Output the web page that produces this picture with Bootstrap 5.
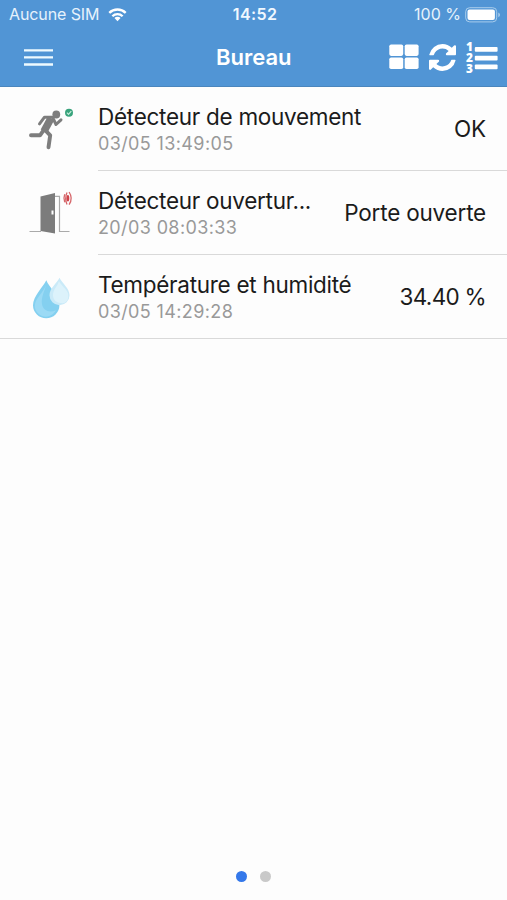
<!DOCTYPE html>
<html lang="fr">
<head>
<meta charset="utf-8">
<meta name="viewport" content="width=device-width, initial-scale=1">
<title>Bureau</title>
<link href="https://cdn.jsdelivr.net/npm/bootstrap@5.3.0/dist/css/bootstrap.min.css" rel="stylesheet">
<style>
body{font-family:Inter,"Liberation Sans",sans-serif;background:#fdfdfd;color:#1b1b1b;height:900px;overflow:hidden}
svg{display:block;flex:none}
.app-top{background:#5195d5;height:87px;border-bottom:1px solid #4b86bd;color:#fff}
.status{height:29px;display:grid;grid-template-columns:1fr auto 1fr;font-size:16px;line-height:29px;padding:0 6px 0 9px;color:#e6f2fc}
.carrier{letter-spacing:-.1px}
.wifi{margin-left:9px}
.clock{font-size:16px;font-weight:600;letter-spacing:.4px;color:#f0f8ff}
.titlebar{height:57px;display:grid;grid-template-columns:192px auto 1fr;padding:0 9px 0 24px}
.heading{font-size:22px;font-weight:600;line-height:57px}
.refresh{margin-left:10px}
.numbers{margin-left:9px}
.sensor{height:84px;padding-left:25px}
.pic{width:50px;height:50px;margin-right:23px}
.detail{border-bottom:1px solid #d9d9d9;padding-right:21px}
.sensor:last-child{border-bottom:1px solid #d9d9d9}
.sensor:last-child .detail{border-bottom:0}
.label-name{font-size:22.5px;line-height:28px;letter-spacing:-.28px;white-space:nowrap;padding-top:1px}
.stamp{font-size:18px;line-height:25px;color:#999;letter-spacing:.38px}
.reading{font-size:22.5px;line-height:28px;letter-spacing:-.2px}
.reading.tight{letter-spacing:-.7px}
.dots{height:47px;gap:13px}
.dot{width:11px;height:11px;border-radius:50%;background:#c9c9c9}
.dot.on{background:#3478ea}
</style>
<script src="https://cdn.jsdelivr.net/npm/bootstrap@5.3.0/dist/js/bootstrap.bundle.min.js"></script>
</head>
<body class="d-flex flex-column">
<header class="app-top">
  <div class="status">
    <div class="d-flex align-items-center"><span class="carrier">Aucune SIM</span>
      <svg class="wifi" width="19" height="14" viewBox="0 0 20 15" fill="none" stroke="#fff" stroke-width="2.5"><path d="M1.2 5.3a12.400 12.400 0 0 1 17.600 0M4.500 8.800a7.800 7.800 0 0 1 11 0"/><path d="M10 14.200l-3.300-3.400a4.700 4.700 0 0 1 6.600 0z" fill="#fff" stroke="none"/></svg>
    </div>
    <span class="clock">14:52</span>
    <div class="d-flex align-items-center justify-content-end"><span>100 %</span>
      <svg class="ms-1" width="36" height="16" viewBox="0 0 36 16"><rect x=".7" y=".7" width="31" height="14.200" rx="4" fill="none" stroke="#a9cdec"/><rect x="2.500" y="2.500" width="27.400" height="10.600" rx="2" fill="#fff"/><path d="M33.300 5.400v4.800q1.700-.7 1.700-2.400t-1.700-2.400z" fill="#a9cdec"/></svg>
    </div>
  </div>
  <div class="titlebar">
    <div class="d-flex align-items-center"><svg width="29" height="18" viewBox="0 0 29 18" stroke="#eefaff" stroke-width="2.300"><path d="M0 1.300h29M0 8.300h29M0 15.500h29"/></svg></div>
    <span class="heading">Bureau</span>
    <div class="d-flex align-items-center justify-content-end">
      <svg width="30" height="28" viewBox="0 0 30 28" fill="#fff"><rect x=".3" y=".4" width="13.900" height="11.500" rx="1.800"/><rect x="15.700" y=".4" width="13.900" height="11.500" rx="1.800"/><rect x=".3" y="13.500" width="13.900" height="11.500" rx="1.800"/><rect x="15.700" y="13.500" width="13.900" height="11.500" rx="1.800"/></svg>
      <svg class="refresh" width="27" height="27" viewBox="0 128 1536 1536" fill="#fff"><path d="M1511 1056q0 5-1 7-64 268-268 434.500t-478 166.500q-146 0-282.500-55t-243.500-157l-129 129q-19 19-45 19t-45-19-19-45v-448q0-26 19-45t45-19h448q26 0 45 19t19 45-19 45l-137 137q71 66 161 102t187 36q134 0 250-65t186-179q11-17 53-117 8-23 30-23h192q13 0 22.500 9.500t9.500 22.500zm25-800v448q0 26-19 45t-45 19h-448q-26 0-45-19t-19-45 19-45l138-138q-148-137-349-137-134 0-250 65t-186 179q-11 17-53 117-8 23-30 23h-199q-13 0-22.500-9.500t-9.500-22.500v-7q65-268 270-434.500t480-166.500q146 0 284 55.500t245 156.500l130-129q19-19 45-19t45 19 19 45z"/></svg>
      <svg class="numbers" width="33" height="34" viewBox="0 0 33 34" fill="#fff"><g font-family="Open Sans, sans-serif" font-weight="800" font-size="11.800"><text x="1" y="10">1</text><text x="1" y="20.900">2</text><text x="1" y="32">3</text></g><rect x="9.800" y="6" width="22.800" height="4.700" rx="1"/><rect x="9.800" y="14.800" width="22.800" height="4.700" rx="1"/><rect x="9.800" y="23.500" width="22.800" height="4.700" rx="1"/></svg>
    </div>
  </div>
</header>
<main class="flex-grow-1">
  <div class="sensor d-flex align-items-center">
    <svg class="pic" viewBox="0 0 50 50"><g transform="translate(0 .8)"><g fill="none" stroke="#7d7d7d" stroke-linecap="round" stroke-linejoin="round"><path d="M14.500 19l5-6.600h8l3.500 7.300 5-4.700" stroke-width="3"/><path d="M26 13.500L19 26.500" stroke-width="7.500" stroke-linecap="butt"/><path d="M18.500 25.500l-3.500 5H6M19.500 24.500l5.700 6L23.500 42.500" stroke-width="3.900"/></g><circle cx="31.300" cy="9.700" r="3.900" fill="#7d7d7d"/><circle cx="44" cy="7.900" r="4" fill="#39a37c"/><path d="M41.900 7.900l1.600 1.600 2.800-3.200" fill="none" stroke="#c5eddb" stroke-width="1.200"/></g></svg>
    <div class="detail d-flex flex-grow-1 align-items-center justify-content-between h-100">
      <div><div class="label-name">Détecteur de mouvement</div><div class="stamp">03/05 13:49:05</div></div>
      <div class="reading">OK</div>
    </div>
  </div>
  <div class="sensor d-flex align-items-center">
    <svg class="pic" viewBox="0 0 50 50"><path d="M4.500 43.500h11.500M29.500 8.300h5v35.200h10" fill="none" stroke="#aaa" stroke-width="1.200"/><path d="M15.500 8.500L30 5v40.500L15.500 43z" fill="#7c7c7c"/><path d="M27.500 22.500v4" stroke="#fff" stroke-width="2"/><g fill="none" stroke="#d6676b" stroke-width="1.300"><path d="M39.700 6.300q-1.500 4 0 8M42 4.400q-2.600 6 0 12M44.100 4q4.200 6.300 0 12.600"/></g><ellipse cx="42.900" cy="10.300" rx="1.400" ry="3.200" fill="#ce4148"/></svg>
    <div class="detail d-flex flex-grow-1 align-items-center justify-content-between h-100">
      <div><div class="label-name">Détecteur ouvertur...</div><div class="stamp">20/03 08:03:33</div></div>
      <div class="reading">Porte ouverte</div>
    </div>
  </div>
  <div class="sensor d-flex align-items-center">
    <svg class="pic" viewBox="0 0 50 50"><g transform="translate(0 1.300)"><path d="M21.300 7C18 14 8 23 8 32a13.200 13 0 0 0 26.400 0C34.400 23 24 14 21.300 7z" fill="#84d0f0"/><path d="M21.500 11C19 19 16 24 17 31c1 6 7 9 14 6-4 7-12 8-17 4-7-6-4-13 0-18 3-4 6-8 7.500-12z" fill="#9bdaf5"/><path d="M34.500 4.500C32 10 24.500 15 24.500 22a10 10 0 0 0 20 0C44.500 15 37 10 34.500 4.500z" fill="#caeaf8"/><path d="M34 8c-2 6-6 8-6 14 0 5 4 8 10 8 5-1 6-6 5-10C41 15 36 12 34 8z" fill="#dcf2fb"/></g></svg>
    <div class="detail d-flex flex-grow-1 align-items-center justify-content-between h-100">
      <div><div class="label-name">Température et humidité</div><div class="stamp">03/05 14:29:28</div></div>
      <div class="reading tight">34.40 %</div>
    </div>
  </div>
</main>
<footer class="dots d-flex justify-content-center align-items-center"><span class="dot on"></span><span class="dot"></span></footer>
</body>
</html>
